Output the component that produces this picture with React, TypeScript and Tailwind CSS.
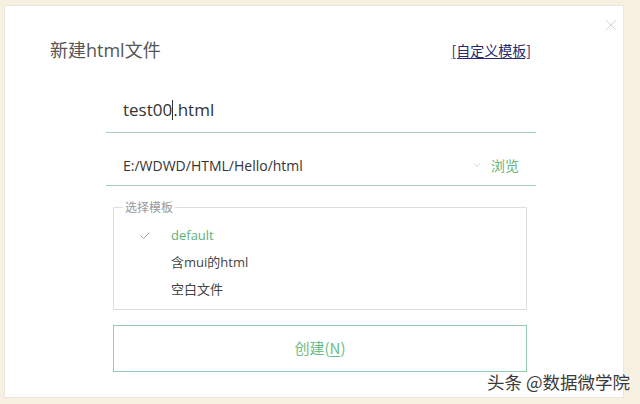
import React from 'react'
import { X, ChevronDown, Check } from 'lucide-react'

const latin = 'font-["Open_Sans","Noto_Sans_CJK_SC",sans-serif]'
const cjk = 'font-["Noto_Sans_CJK_SC",sans-serif]'

export default function App() {
  const templates = ['default', '含mui的html', '空白文件']

  return (
    <div className="relative w-[640px] h-[404px] overflow-hidden bg-[#f6f0e1] pt-[5px] pl-[4px]">
      {/* Dialog */}
      <div className="relative w-[620px] h-[393px] bg-white border border-[#ebe6da]">
        <button className="absolute right-[3px] top-[10px] text-[#cfcfcf]">
          <X className="w-[18px] h-[18px]" strokeWidth={1.2} />
        </button>

        {/* Header */}
        <div className="flex items-center justify-between pt-[27px] pl-[45px] pr-[92px] h-[61px]">
          <h1 className={`${latin} text-[18px] leading-[34px] text-[#555]`}>新建html文件</h1>
          <a className={`${cjk} text-[14px] text-[#232a72] underline underline-offset-2`}>[自定义模板]</a>
        </div>

        <div className="ml-[101px] w-[430px]">
          {/* File name */}
          <div className="mt-[21px] h-[45px] border-b border-[#a9cdb7] pl-[17px] flex items-center">
            <span className={`${latin} text-[17px] text-[#333]`}>test00</span>
            <span className="w-px h-[20px] bg-[#333]" />
            <span className={`${latin} text-[17px] text-[#333]`}>.html</span>
          </div>

          {/* Path */}
          <div className="h-[53px] pt-[12px] border-b border-[#a9cdb7] pl-[17px] pr-[17px] flex items-center">
            <span className={`${latin} text-[14px] text-[#333] flex-1`}>E:/WDWD/HTML/Hello/html</span>
            <ChevronDown className="w-[12px] h-[12px] text-[#c8c8c8] mr-[8px]" strokeWidth={1.5} />
            <span className={`${cjk} text-[14px] text-[#66b47c]`}>浏览</span>
          </div>

          {/* Template select */}
          <fieldset className="mt-[13px] ml-[7px] w-[414px] border border-[#dedede] px-0 pb-[6px]">
            <legend className={`${cjk} ml-[9px] px-[2px] text-[12px] leading-[16px] text-[#999]`}>选择模板</legend>
            <div className="pt-[7px]">
              {templates.map((t, i) => (
                <div key={t} className="flex items-center h-[27px]">
                  <span className="w-[57px] flex justify-end pr-[20px]">
                    {i === 0 && <Check className="w-[12px] h-[12px] text-[#8a8a8a]" strokeWidth={1.5} />}
                  </span>
                  <span
                    className={`${latin} text-[13px] ${i === 0 ? 'text-[#5cb378]' : 'text-[#444]'}`}
                  >
                    {t}
                  </span>
                </div>
              ))}
            </div>
          </fieldset>

          {/* Create button */}
          <button
            className={`${cjk} mt-[15px] ml-[7px] w-[414px] h-[47px] border border-[#92cdb0] text-[15px] text-[#6bbd88]`}
          >
            创建(<span className="underline underline-offset-2">N</span>)
          </button>
        </div>
      </div>

      {/* Watermark */}
      <div
        className={`${cjk} absolute right-[10px] top-[370px] text-[17.5px] leading-[24px] text-[#3a3a3a] [text-shadow:0_0_2px_#fff,0_0_2px_#fff]`}
      >
        头条 @数据微学院
      </div>
    </div>
  )
}
